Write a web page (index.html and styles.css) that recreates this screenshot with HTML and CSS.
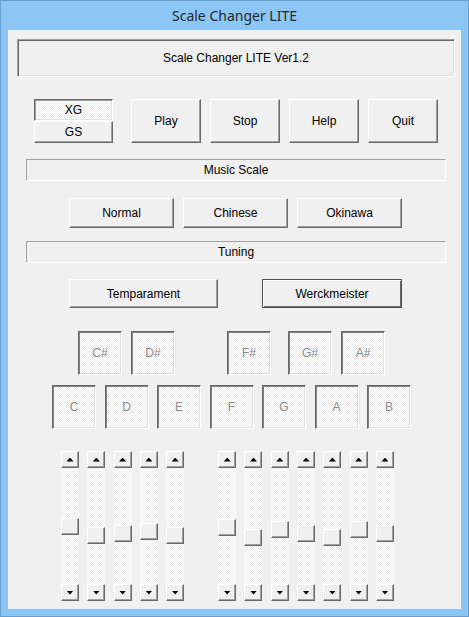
FILE: index.html
```html
<!DOCTYPE html>
<html lang="en">
<head>
    <meta charset="UTF-8">
    <title>Scale Changer LITE</title>
    <link rel="stylesheet" href="styles.css">
</head>
<body>
    <div class="window">
        <div class="titlebar">Scale Changer LITE</div>
        <div class="client">
            <div class="version">Scale Changer LITE Ver1.2</div>

            <div class="row-main">
                <div class="gm-toggle">
                    <button class="btn btn-pressed checker">XG</button>
                    <button class="btn">GS</button>
                </div>
                <div class="main-buttons">
                    <button class="btn btn-main">Play</button>
                    <button class="btn btn-main">Stop</button>
                    <button class="btn btn-main">Help</button>
                    <button class="btn btn-main">Quit</button>
                </div>
            </div>

            <div class="section">Music Scale</div>
            <div class="scale-row">
                <button class="btn btn-scale">Normal</button>
                <button class="btn btn-scale">Chinese</button>
                <button class="btn btn-scale">Okinawa</button>
            </div>

            <div class="section section-tuning">Tuning</div>
            <div class="tuning-row">
                <button class="btn btn-temp">Temparament</button>
                <button class="btn btn-default btn-werck">Werckmeister</button>
            </div>

            <div class="keys sharps">
                <button class="key checker">C#</button>
                <button class="key checker">D#</button>
                <button class="key checker key-fs">F#</button>
                <button class="key checker key-gs">G#</button>
                <button class="key checker">A#</button>
            </div>
            <div class="keys naturals">
                <button class="key checker">C</button>
                <button class="key checker">D</button>
                <button class="key checker">E</button>
                <button class="key checker">F</button>
                <button class="key checker">G</button>
                <button class="key checker">A</button>
                <button class="key checker">B</button>
            </div>

            <div class="sliders">
                <div class="slider-group" id="groupLeft"></div>
                <div class="slider-group" id="groupRight"></div>
            </div>
        </div>
    </div>

    <script>
        // thumb offsets (px from top of track) for each slider
        const leftValues = [50, 59, 57, 55, 59];
        const rightValues = [51, 61, 53, 57, 61, 53, 57];

        function buildSliders(container, values) {
            values.forEach(function(v) {
                const slider = document.createElement('div');
                slider.className = 'slider';
                slider.innerHTML =
                    '<div class="arrow"><span class="tri tri-up"></span></div>' +
                    '<div class="track checker"><div class="thumb" style="margin-top:' + v + 'px"></div></div>' +
                    '<div class="arrow"><span class="tri tri-down"></span></div>';
                container.appendChild(slider);
            });
        }

        buildSliders(document.getElementById('groupLeft'), leftValues);
        buildSliders(document.getElementById('groupRight'), rightValues);
    </script>
</body>
</html>
```

FILE: styles.css
```css
body {
    margin: 0;
    font-family: "Liberation Sans", Arial, sans-serif;
    font-size: 12px;
    color: #000;
}
.window {
    width: 469px;
    height: 617px;
    box-sizing: border-box;
    background-color: #8cc6f7;
    border: 1px solid #6a9ed0;
    display: flex;
    flex-direction: column;
}
.titlebar {
    height: 29px;
    line-height: 29px;
    text-align: center;
    font-family: "Noto Sans", sans-serif;
    font-size: 14px;
    color: #262626;
}
.client {
    margin: 0 7px;
    height: 579px;
    background-color: #f0f0f0;
    display: flex;
    flex-direction: column;
    align-items: flex-start;
}
.checker {
    background: conic-gradient(#fff 25%, #ececec 0 50%, #fff 0 75%, #ececec 0) 0 0 / 2px 2px;
}

/* generic win32 buttons */
.btn {
    box-sizing: border-box;
    margin: 0;
    padding: 0;
    font: inherit;
    color: #000;
    background-color: #f0f0f0;
    border: 1px solid;
    border-color: #fff #696969 #696969 #fff;
    box-shadow: inset -1px -1px #a0a0a0;
}
.btn-pressed {
    border-color: #696969 #fff #fff #696969;
    box-shadow: inset 1px 1px #a0a0a0, inset -1px -1px #e3e3e3;
}
.btn-default {
    border-color: #505050;
    box-shadow: inset 1px 1px #fff, inset -1px -1px #696969;
}

.version {
    margin: 9px 0 0 9px;
    width: 438px;
    height: 38px;
    box-sizing: border-box;
    border: 1px solid;
    border-color: #a0a0a0 #fff #fff #a0a0a0;
    box-shadow: inset 1px 1px #696969, inset -1px -1px #e3e3e3;
    display: flex;
    align-items: center;
    justify-content: center;
}

.row-main {
    margin: 22px 0 0 26px;
    display: flex;
    gap: 18px;
}
.gm-toggle {
    display: flex;
    flex-direction: column;
    width: 79px;
}
.gm-toggle .btn {
    height: 22px;
}
.main-buttons {
    display: flex;
    gap: 9px;
}
.btn-main {
    width: 70px;
    height: 44px;
}

.section {
    margin: 16px 0 0 18px;
    width: 420px;
    height: 22px;
    box-sizing: border-box;
    border: 1px solid;
    border-color: #a0a0a0 #fff #fff #a0a0a0;
    display: flex;
    align-items: center;
    justify-content: center;
}
.section-tuning {
    margin-top: 13px;
}

.scale-row {
    margin: 17px 0 0 61px;
    display: flex;
    gap: 9px;
}
.btn-scale {
    width: 105px;
    height: 30px;
}

.tuning-row {
    margin: 16px 0 0 61px;
    display: flex;
    gap: 44px;
}
.btn-temp {
    width: 149px;
    height: 29px;
}
.btn-werck {
    width: 140px;
    height: 29px;
}

.keys {
    display: flex;
}
.sharps {
    margin: 23px 0 0 70px;
    gap: 9px;
}
.naturals {
    margin: 10px 0 0 44px;
    gap: 8.5px;
}
.key {
    box-sizing: border-box;
    width: 44px;
    height: 44px;
    margin: 0;
    padding: 0;
    font: inherit;
    color: #8c8c8c;
    border: 1px solid;
    border-color: #696969 #fff #fff #696969;
    box-shadow: inset 1px 1px #808080, inset -1px -1px #e3e3e3;
}
.key-fs {
    margin-left: 43px;
}
.key-gs {
    margin-left: 8px;
}

.sliders {
    margin: 22px 0 0 53px;
    display: flex;
    gap: 34px;
}
.slider-group {
    display: flex;
    gap: 8.3px;
}
.slider {
    width: 18px;
    height: 150px;
    display: flex;
    flex-direction: column;
}
.arrow, .thumb {
    box-sizing: border-box;
    height: 17px;
    background-color: #f0f0f0;
    border: 1px solid;
    border-color: #fff #696969 #696969 #fff;
    box-shadow: inset -1px -1px #a0a0a0;
}
.arrow {
    display: flex;
    align-items: center;
    justify-content: center;
}
.track {
    flex: 1;
}
.tri {
    display: block;
    width: 7px;
    height: 4px;
    background-color: #000;
}
.tri-up {
    clip-path: polygon(50% 0, 100% 100%, 0 100%);
}
.tri-down {
    clip-path: polygon(0 0, 100% 0, 50% 100%);
}
```
